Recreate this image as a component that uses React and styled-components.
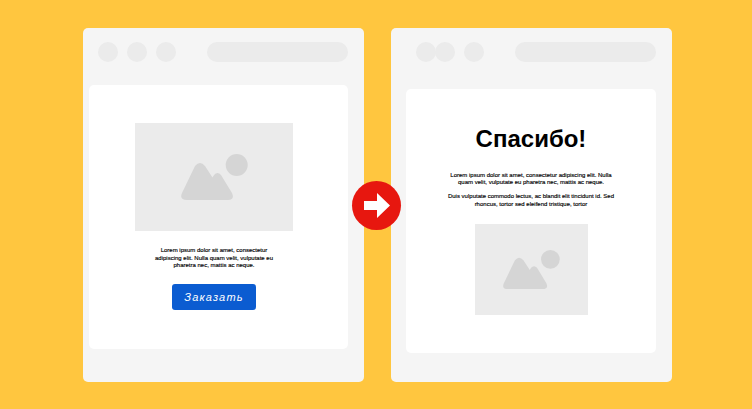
import styled, { createGlobalStyle } from "styled-components"

const GlobalStyle = createGlobalStyle`
    html, body {
        margin: 0;
        padding: 0;
        background: #ffc63f;
    }
`
const Page = styled.div`
    position: relative;
    width: 752px;
    height: 409px;
    box-sizing: border-box;
    padding: 28px 0 0 83px;
    display: flex;
    align-items: flex-start;
    gap: 27px;
    background: #ffc63f;
    font-family: "Liberation Sans", Arial, sans-serif;
    overflow: hidden;
`
const Browser = styled.div`
    width: 281px;
    height: 354px;
    box-sizing: border-box;
    padding: 14px 16px 0 ${props => props.$inset}px;
    background: #f5f5f5;
    border-radius: 5px;
`
const Toolbar = styled.div`
    display: flex;
    align-items: center;
    justify-content: space-between;
    margin-left: ${props => props.$toolbarShift}px;
`
const Dots = styled.div`
    display: flex;
`
const Dot = styled.span`
    width: 20px;
    height: 20px;
    border-radius: 50%;
    background: #ebebeb;
    margin-right: ${props => (props.$overlap ? -1 : 9)}px;
    &:last-child {
        margin-right: 0;
    }
`
const AddressBar = styled.div`
    width: 141px;
    height: 20px;
    border-radius: 10px;
    background: #ebebeb;
`
const Content = styled.div`
    height: 264px;
    margin-top: ${props => props.$top}px;
    box-sizing: border-box;
    padding: ${props => props.$paddingTop}px ${props => props.$paddingRight}px 0 0;
    display: flex;
    flex-direction: column;
    align-items: center;
    background: #fff;
    border-radius: 5px;
`
const Placeholder = styled.div`
    width: ${props => props.$w}px;
    height: ${props => props.$h}px;
    margin-top: ${props => props.$top || 0}px;
    flex-shrink: 0;
    display: flex;
    align-items: center;
    justify-content: center;
    background: #ebebeb;
    svg {
        width: ${props => props.$icon}px;
    }
`
const Blurb = styled.p`
    width: ${props => props.$w}px;
    margin: ${props => props.$top}px 0 0;
    font-size: 6px;
    line-height: ${props => props.$leading}px;
    font-weight: 400;
    text-align: center;
    color: #000;
    -webkit-text-stroke: 0.15px #000;
`
const OrderButton = styled.button`
    width: 84px;
    height: 26px;
    margin-top: 14px;
    padding: 0;
    border: 0;
    border-radius: 3px;
    background: #0b5cd1;
    color: #fff;
    font-family: inherit;
    font-size: 11px;
    font-style: italic;
    letter-spacing: 1.2px;
`
const Thanks = styled.h1`
    margin: 0;
    font-size: 24px;
    line-height: 29px;
    font-weight: 700;
    color: #000;
`
const ArrowBadge = styled.div`
    position: absolute;
    left: 352px;
    top: 181px;
    width: 49px;
    height: 49px;
    border-radius: 50%;
    background: #e7170f;
    display: flex;
    align-items: center;
    justify-content: center;
`

function PictureIcon() {
    return (
        <svg viewBox="0 0 67 46" fill="#d5d5d5">
            <circle cx="55.7" cy="11" r="11" />
            <path d="M6 46 Q-2 46 1 39 L14 12 Q19 6 24 12 L31.5 23.5 L33 21 Q36.5 17 40 21 L51 39 Q54 46 47 46 Z" />
        </svg>
    )
}

export default function App() {
    return (
        <Page>
            <GlobalStyle />
            <Browser $inset={6}>
                <Toolbar $toolbarShift={9}>
                    <Dots>
                        <Dot />
                        <Dot />
                        <Dot />
                    </Dots>
                    <AddressBar />
                </Toolbar>
                <Content $top={23} $paddingTop={38} $paddingRight={9}>
                    <Placeholder $w={158} $h={108} $icon={67}>
                        <PictureIcon />
                    </Placeholder>
                    <Blurb $w={125} $top={16} $leading={7.6}>
                        Lorem ipsum dolor sit amet, consectetur adipiscing elit. Nulla quam velit, vulputate eu pharetra nec, mattis ac neque.
                    </Blurb>
                    <OrderButton>Заказать</OrderButton>
                </Content>
            </Browser>
            <Browser $inset={15}>
                <Toolbar $toolbarShift={10}>
                    <Dots>
                        <Dot $overlap />
                        <Dot />
                        <Dot />
                    </Dots>
                    <AddressBar />
                </Toolbar>
                <Content $top={27} $paddingTop={35} $paddingRight={0}>
                    <Thanks>Спасибо!</Thanks>
                    <Blurb $w={170} $top={19} $leading={7.2}>
                        Lorem ipsum dolor sit amet, consectetur adipiscing elit. Nulla quam velit, vulputate eu pharetra nec, mattis ac neque.
                    </Blurb>
                    <Blurb $w={170} $top={7} $leading={7.2}>
                        Duis vulputate commodo lectus, ac blandit elit tincidunt id. Sed rhoncus, tortor sed eleifend tristique, tortor
                    </Blurb>
                    <Placeholder $w={113} $h={91} $icon={57} $top={16}>
                        <PictureIcon />
                    </Placeholder>
                </Content>
            </Browser>
            <ArrowBadge>
                <svg width="26" height="25" viewBox="0 0 26 25" fill="#fff">
                    <path d="M0 8 H13 V0 L26 12.5 L13 25 V17 H0 Z" />
                </svg>
            </ArrowBadge>
        </Page>
    )
}
